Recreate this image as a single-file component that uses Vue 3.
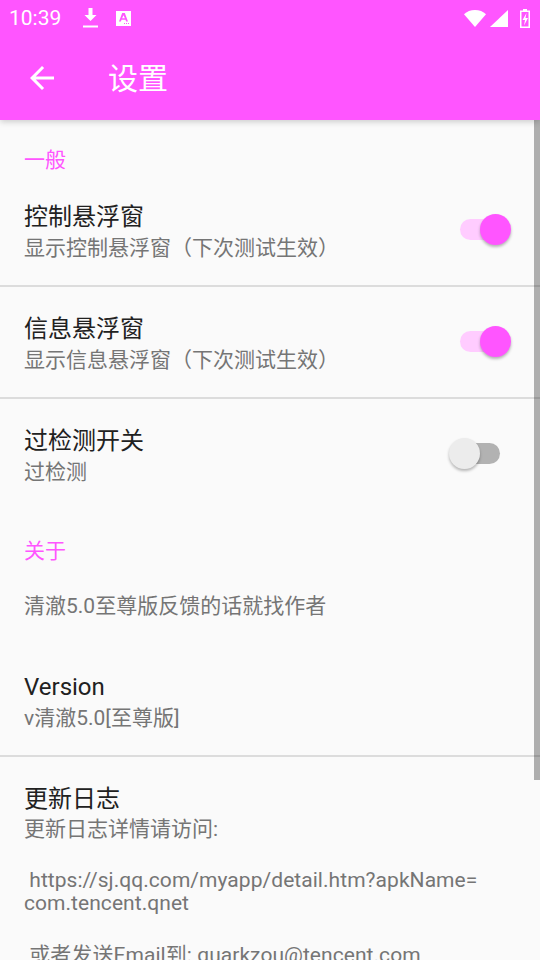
<template>
  <div class="screen">
    <header class="appbar">
      <div class="status">
        <span class="time">10:39</span>
        <svg class="st-icon" viewBox="0 0 15 20" width="15" height="20">
          <path d="M5.500 0h4v7h4l-6 6-6-6h4z" fill="#fff" />
          <rect x="0" y="17.500" width="15" height="2" fill="#fff" />
        </svg>
        <svg class="st-icon" viewBox="0 0 15 15" width="15" height="15">
          <path fill="#fff" fill-rule="evenodd" d="M0 0h15v15H0zM6.200 2 3 10.500h1.900l.6-1.700h4l.6 1.700H12L8.800 2zM7.500 4.200l1.400 3H6.100zM8 12v1h1v-1zm2 0v1h1v-1zm2 0v1h1v-1z" />
        </svg>
        <span class="spacer"></span>
        <svg viewBox="0 0 22 17" width="22" height="17">
          <path d="M0 4.200C2.800 1.600 6.700 0 11 0s8.200 1.600 11 4.200L11 17z" fill="#fff" />
        </svg>
        <svg class="signal" viewBox="0 0 18 17" width="18" height="17">
          <path d="M18 0v17H0z" fill="#fff" />
        </svg>
        <svg class="battery" viewBox="0 0 10 19" width="10" height="19">
          <path fill="#fff" fill-rule="evenodd" d="M3 0h4v1.500h3V19H0V1.500h3zM1.500 3v14.500h7V3zM6.500 4 2.500 11h2.500L4 16.500 8 9H5.500z" />
        </svg>
      </div>
      <div class="toolbar">
        <svg class="back" viewBox="4 4 16 16" width="24" height="24">
          <path d="M20 11H7.830l5.590-5.590L12 4l-8 8 8 8 1.410-1.410L7.830 13H20v-2z" fill="#fff" />
        </svg>
        <span class="page-title">设置</span>
      </div>
    </header>

    <main class="content">
      <div class="category first">一般</div>
      <template v-for="item in general" :key="item.title">
        <div class="pref">
          <div class="pref-text">
            <div class="title">{{ item.title }}</div>
            <div class="summary">{{ item.summary }}</div>
          </div>
          <div class="switch" :class="{ on: item.on }">
            <span class="track"></span>
            <span class="thumb"></span>
          </div>
        </div>
        <div v-if="item.divider" class="divider"></div>
      </template>

      <div class="category about">关于</div>
      <div class="note">清澈5.0至尊版反馈的话就找作者</div>

      <div class="pref version">
        <div class="pref-text">
          <div class="title">Version</div>
          <div class="summary">v清澈5.0[至尊版]</div>
        </div>
      </div>
      <div class="divider"></div>

      <div class="pref log">
        <div class="pref-text">
          <div class="title">更新日志</div>
          <div class="summary">更新日志详情请访问:</div>
          <div class="summary gap">&nbsp;https://sj.qq.com/myapp/detail.htm?apkName=<br />com.tencent.qnet</div>
          <div class="summary gap last">&nbsp;或者发送Email到: quarkzou@tencent.com</div>
        </div>
      </div>
    </main>

    <div class="scrollbar"></div>
  </div>
</template>

<script setup>
const general = [
  { title: '控制悬浮窗', summary: '显示控制悬浮窗（下次测试生效）', on: true, divider: true },
  { title: '信息悬浮窗', summary: '显示信息悬浮窗（下次测试生效）', on: true, divider: true },
  { title: '过检测开关', summary: '过检测', on: false, divider: false }
]
</script>

<style>
html, body {
  margin: 0;
  background: #fafafa;
}
</style>

<style scoped>
.screen {
  position: relative;
  width: 540px;
  height: 960px;
  overflow: hidden;
  background: #fafafa;
  font-family: Roboto, "Noto Sans CJK SC", sans-serif;
}

.appbar {
  position: relative;
  z-index: 1;
  background: #ff55ff;
  box-shadow: 0 2px 6px rgba(0, 0, 0, 0.18);
}

.status {
  height: 36px;
  display: flex;
  align-items: center;
  padding: 0 10px 0 9px;
  color: #fff;
}

.time {
  font-size: 21px;
  width: 74px;
}

.st-icon {
  margin-right: 18px;
}

.spacer {
  flex: 1;
}

.signal {
  margin-left: 4px;
}

.battery {
  margin-left: 12px;
}

.toolbar {
  height: 84px;
  display: flex;
  align-items: center;
  padding-left: 30px;
}

.back {
  width: 24px;
  height: 24px;
}

.page-title {
  margin: -4px 0 0 54px;
  font-size: 30px;
  color: #fff;
}

.category {
  height: 28px;
  line-height: 28px;
  padding-left: 24px;
  font-size: 21px;
  color: #ff55ff;
}

.first {
  margin-top: 26px;
}

.about {
  margin-top: 53px;
}

.pref {
  display: flex;
  align-items: center;
  padding: 0 24px;
}

.category + .pref {
  margin-top: 27px;
}

.divider + .pref {
  margin-top: 26px;
}

.pref-text {
  flex: 1;
}

.title {
  font-size: 24px;
  line-height: 32px;
  color: #212121;
}

.summary {
  font-size: 21px;
  line-height: 24px;
  margin-top: 3px;
  color: #757575;
}

.log .summary {
  margin-top: 2px;
}

.log .summary.gap {
  margin-top: 28px;
  line-height: 23px;
  letter-spacing: 0.05px;
}

.log .summary.last {
  margin-top: 29px;
}

.divider {
  height: 2px;
  margin-top: 25px;
  background: #dcdcdc;
}

.note {
  margin-top: 27px;
  padding-left: 24px;
  font-size: 21px;
  line-height: 28px;
  color: #757575;
}

.pref.version {
  margin-top: 51px;
}

.switch {
  position: relative;
  width: 62px;
  height: 31px;
  margin: -2px 5px 0 0;
}

.track {
  position: absolute;
  left: 11px;
  right: 11px;
  top: 5px;
  height: 21px;
  border-radius: 11px;
  background: #b2b2b2;
}

.thumb {
  position: absolute;
  left: 0;
  top: 0;
  width: 31px;
  height: 31px;
  border-radius: 50%;
  background: #ececec;
  box-shadow: 0 2px 3px rgba(0, 0, 0, 0.28);
}

.switch.on .track {
  background: #ffccff;
}

.switch.on .thumb {
  left: auto;
  right: 0;
  background: #ff55ff;
}

.scrollbar {
  position: absolute;
  top: 120px;
  right: 0;
  width: 6px;
  height: 660px;
  background: rgba(0, 0, 0, 0.3);
}
</style>
